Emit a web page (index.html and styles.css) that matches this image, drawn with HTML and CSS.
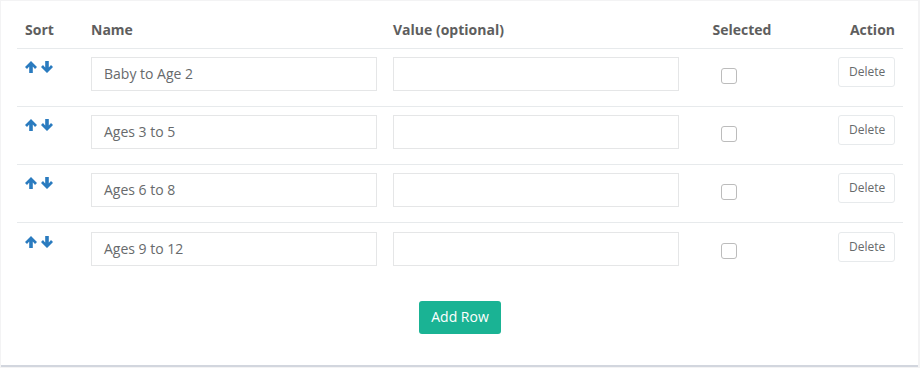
FILE: index.html
```html
<!DOCTYPE html>
<html>
<head>
<meta charset="utf-8">
<link rel="stylesheet" href="styles.css">
</head>
<body>
<div class="panel">
  <div class="grid head">
    <div class="c-sort">Sort</div>
    <div class="c-name">Name</div>
    <div class="c-value">Value (optional)</div>
    <div class="c-sel">Selected</div>
    <div class="c-act">Action</div>
  </div>

  <div class="grid row">
    <div class="c-sort arrows">
      <svg viewBox="0 0 12 12" class="arr"><path d="M6 0 L12 6 L10 8 L7.8 5.6 L7.8 12 L4.2 12 L4.2 5.6 L2 8 L0 6 Z"/></svg>
      <svg viewBox="0 0 12 12" class="arr"><path d="M6 12 L12 6 L10 4 L7.8 6.4 L7.8 0 L4.2 0 L4.2 6.4 L2 4 L0 6 Z"/></svg>
    </div>
    <div class="c-name"><div class="input">Baby to Age 2</div></div>
    <div class="c-value"><div class="input"></div></div>
    <div class="c-sel"><span class="check"></span></div>
    <div class="c-act"><span class="btn-del">Delete</span></div>
  </div>

  <div class="grid row">
    <div class="c-sort arrows">
      <svg viewBox="0 0 12 12" class="arr"><path d="M6 0 L12 6 L10 8 L7.8 5.6 L7.8 12 L4.2 12 L4.2 5.6 L2 8 L0 6 Z"/></svg>
      <svg viewBox="0 0 12 12" class="arr"><path d="M6 12 L12 6 L10 4 L7.8 6.4 L7.8 0 L4.2 0 L4.2 6.4 L2 4 L0 6 Z"/></svg>
    </div>
    <div class="c-name"><div class="input">Ages 3 to 5</div></div>
    <div class="c-value"><div class="input"></div></div>
    <div class="c-sel"><span class="check"></span></div>
    <div class="c-act"><span class="btn-del">Delete</span></div>
  </div>

  <div class="grid row">
    <div class="c-sort arrows">
      <svg viewBox="0 0 12 12" class="arr"><path d="M6 0 L12 6 L10 8 L7.8 5.6 L7.8 12 L4.2 12 L4.2 5.6 L2 8 L0 6 Z"/></svg>
      <svg viewBox="0 0 12 12" class="arr"><path d="M6 12 L12 6 L10 4 L7.8 6.4 L7.8 0 L4.2 0 L4.2 6.4 L2 4 L0 6 Z"/></svg>
    </div>
    <div class="c-name"><div class="input">Ages 6 to 8</div></div>
    <div class="c-value"><div class="input"></div></div>
    <div class="c-sel"><span class="check"></span></div>
    <div class="c-act"><span class="btn-del">Delete</span></div>
  </div>

  <div class="grid row last">
    <div class="c-sort arrows">
      <svg viewBox="0 0 12 12" class="arr"><path d="M6 0 L12 6 L10 8 L7.8 5.6 L7.8 12 L4.2 12 L4.2 5.6 L2 8 L0 6 Z"/></svg>
      <svg viewBox="0 0 12 12" class="arr"><path d="M6 12 L12 6 L10 4 L7.8 6.4 L7.8 0 L4.2 0 L4.2 6.4 L2 4 L0 6 Z"/></svg>
    </div>
    <div class="c-name"><div class="input">Ages 9 to 12</div></div>
    <div class="c-value"><div class="input"></div></div>
    <div class="c-sel"><span class="check"></span></div>
    <div class="c-act"><span class="btn-del">Delete</span></div>
  </div>

  <div class="foot">
    <span class="btn-add">Add Row</span>
  </div>
</div>
</body>
</html>
```

FILE: styles.css
```css
html, body {
  margin: 0;
  padding: 0;
  background: #f3f3f4;
}
body {
  padding: 1px 2px 0 1px;
  font-family: "Open Sans", "DejaVu Sans", sans-serif;
  color: #676a6c;
  font-size: 14px;
}
.panel {
  background: #fff;
  width: 917px;
  box-sizing: border-box;
  border-bottom: 2px solid #d2d6de;
  padding: 11px 15px 0 16px;
  height: 366px;
}
.grid {
  display: grid;
  grid-template-columns: 66px 302px 301px 110px 1fr;
}
.head {
  font-weight: 700;
  line-height: 20px;
  border-bottom: 1px solid #e7eaec;
  color: #5e5e5e;
}
.head > div {
  padding: 8px;
}
.head .c-sel { text-align: center; padding-left: 10px; }
.head .c-act { text-align: right; }
.row {
  height: 58px;
  box-sizing: border-box;
  border-bottom: 1px solid #e7eaec;
}
.row.last {
  border-bottom: none;
  padding-top: 1px;
}
.row > div {
  padding: 8px;
}
.arrows {
  display: flex;
  gap: 4px;
  padding-top: 12px !important;
}
.arr {
  width: 12px;
  height: 12px;
  fill: #2a7bbf;
}
.input {
  height: 34px;
  box-sizing: border-box;
  border: 1px solid #e5e6e7;
  padding: 6px 12px;
  line-height: 20px;
  font-size: 14px;
  color: #676a6c;
  width: 286px;
}
.row .c-sel {
  padding: 19px 0 0 35px;
}
.check {
  display: block;
  width: 16px;
  height: 16px;
  box-sizing: border-box;
  border: 1px solid #bcbcbc;
  border-radius: 3px;
  background: #fff;
}
.row .c-act {
  display: flex;
  justify-content: flex-end;
  align-items: flex-start;
}
.btn-del {
  display: inline-block;
  border: 1px solid #e7eaec;
  border-radius: 3px;
  font-size: 12px;
  line-height: 18px;
  padding: 5px 10px;
  color: #676a6c;
  width: 57px;
  box-sizing: border-box;
  text-align: center;
}
.foot {
  display: flex;
  justify-content: center;
  padding-top: 20px;
}
.btn-add {
  display: inline-block;
  background: #1ab394;
  color: #fff;
  border-radius: 3px;
  font-size: 14px;
  line-height: 20px;
  padding: 6px 12px 7px;
  width: 82px;
  box-sizing: border-box;
  text-align: center;
}
```
